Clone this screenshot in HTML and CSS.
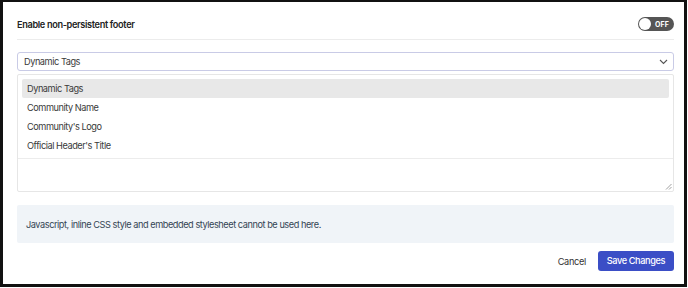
FILE: index.html
```html
<!DOCTYPE html>
<html>
<head>
<meta charset="utf-8">
<link rel="stylesheet" href="styles.css">
</head>
<body>
<div class="frame">
  <div class="row-head">
    <span class="title">Enable non-persistent footer</span>
    <span class="toggle"><span class="knob"></span><span class="toggle-label">OFF</span></span>
  </div>
  <div class="divider"></div>
  <div class="select">
    <span>Dynamic Tags</span>
    <svg class="chev" width="9" height="6" viewBox="0 0 9 6"><path d="M1 1l3.5 3.5L8 1" fill="none" stroke="#555" stroke-width="1.1"/></svg>
  </div>
  <div class="editor">
    <ul class="list">
      <li class="active">Dynamic Tags</li>
      <li>Community Name</li>
      <li>Community's Logo</li>
      <li>Official Header's Title</li>
    </ul>
    <div class="area">
      <svg class="grip" width="7" height="7" viewBox="0 0 7 7"><path d="M6.5 1L1 6.5M6.5 4L4 6.5" stroke="#888" stroke-width="0.8"/></svg>
    </div>
  </div>
  <div class="info">Javascript, inline CSS style and embedded stylesheet cannot be used here.</div>
  <div class="actions">
    <span class="cancel">Cancel</span>
    <span class="save">Save Changes</span>
  </div>
</div>
</body>
</html>
```
FILE: styles.css
```css
html, body { margin: 0; padding: 0; background: #fff; }
body { font-family: Inter, "Noto Sans", sans-serif; color: #1f2328; }
.frame {
  box-sizing: border-box;
  width: 687px;
  height: 287px;
  border: 3px solid #111;
  border-top-width: 2px;
  padding: 0 10px 0 14px;
  display: flex;
  flex-direction: column;
}
.row-head {
  display: flex;
  align-items: center;
  justify-content: space-between;
  height: 37px;
  padding-top: 7px;
  box-sizing: border-box;
}
.title { font-size: 9.2px; font-weight: 600; color: #222; letter-spacing: -0.35px; }
.toggle {
  width: 36px; height: 14px;
  border-radius: 7px;
  background: #555;
  display: flex; align-items: center;
  box-sizing: border-box;
}
.knob {
  width: 12px; height: 12px; border-radius: 50%;
  background: #fff; margin-left: 1px;
}
.toggle-label { color: #fff; font-size: 7px; font-weight: 700; margin-left: 4px; letter-spacing: 0.1px; }
.divider { height: 1px; background: #ececec; }
.select {
  margin-top: 12px;
  height: 19px;
  box-sizing: border-box;
  border: 1px solid #c9cbe6;
  border-radius: 3px;
  display: flex; align-items: center; justify-content: space-between;
  padding: 0 5px 0 6px;
  font-size: 9.2px; letter-spacing: -0.45px; color: #3a3a3a;
}
.editor {
  margin-top: 3px;
  border: 1px solid #e6e6e6;
  border-radius: 2px;
}
.list {
  list-style: none; margin: 0; padding: 4px 4px 3px 4px;
  border-bottom: 1px solid #ececec;
}
.list li {
  height: 19px; line-height: 19px;
  padding-left: 5px;
  font-size: 9.2px; letter-spacing: -0.45px; color: #3a3a3a;
  border-radius: 2px;
}
.list li.active { background: #e8e8e8; }
.area { height: 32px; position: relative; }
.grip { position: absolute; right: 1px; bottom: 1px; }
.info {
  margin-top: 13px;
  background: #f0f4f8;
  height: 38px;
  display: flex; align-items: center;
  padding-left: 9px;
  font-size: 9.2px; letter-spacing: -0.45px; color: #344554;
  border-radius: 2px;
}
.actions {
  margin-top: 8px;
  display: flex; justify-content: flex-end; align-items: center;
  gap: 12px;
}
.cancel { font-size: 9.2px; letter-spacing: -0.35px; color: #333; }
.save {
  background: #3b4ec6; color: #fff;
  font-size: 9.2px; font-weight: 500; letter-spacing: -0.4px;
  height: 20px; line-height: 20px; padding: 0 9px;
  border-radius: 3px;
}
```
